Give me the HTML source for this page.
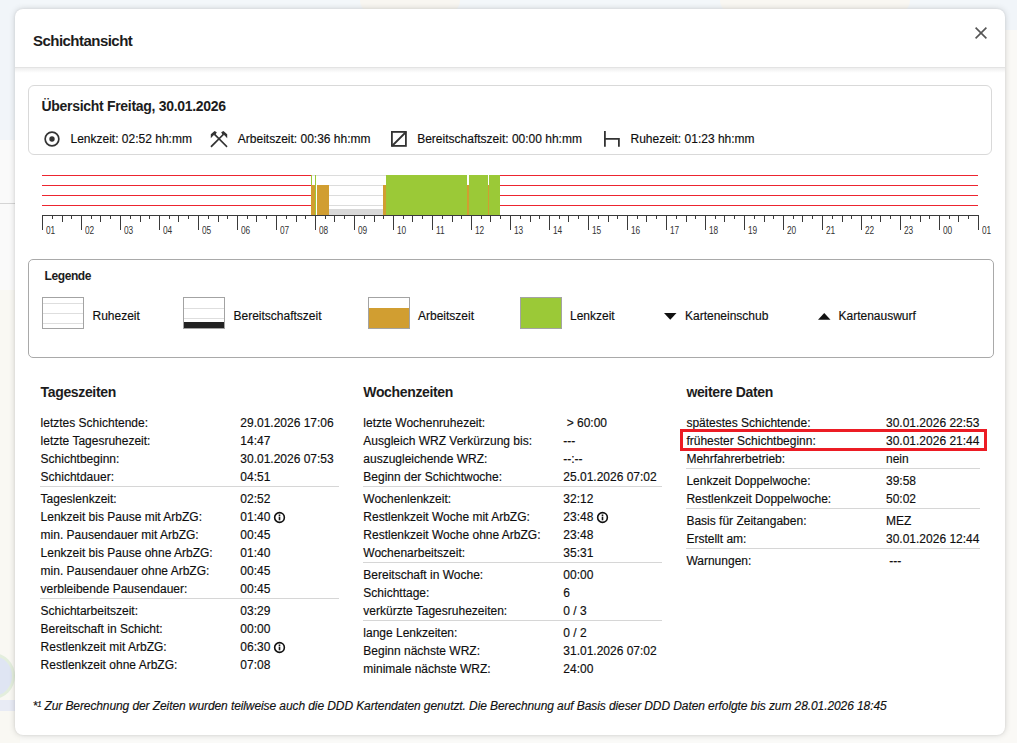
<!DOCTYPE html>
<html><head><meta charset="utf-8">
<style>
*{box-sizing:border-box;margin:0;padding:0}
html,body{width:1017px;height:743px;overflow:hidden}
body{background:#fafaf8;font-family:"Liberation Sans",sans-serif;color:#222;position:relative}
.modal{position:absolute;left:15px;top:9px;width:990px;height:726px;background:#fff;border-radius:8px;box-shadow:0 0 6px rgba(0,0,0,.17),0 0 2px rgba(0,0,0,.08)}
.hdr{position:absolute;left:15px;top:67px;width:990px;height:1px;background:#e3e3e3}
.hdrs{position:absolute;left:15px;top:68px;width:990px;height:5px;background:linear-gradient(rgba(0,0,0,.065),rgba(0,0,0,0))}
.box{position:absolute;border:1px solid #d9d9d9;border-radius:6px}
.a{position:absolute;white-space:nowrap;line-height:normal;-webkit-text-stroke:0.15px currentColor}
.sep{position:absolute;height:1px;background:#d6d6d6}
svg{position:absolute;overflow:visible}
</style></head><body>
<div style="position:absolute;left:0;top:0;width:1017px;height:30px;background:#f3f7fa"></div>
<div style="position:absolute;left:360px;top:0;width:100px;height:14px;background:#f8f6f1;border-radius:0 0 30px 30px"></div>
<div style="position:absolute;left:720px;top:0;width:190px;height:14px;background:#f9f7f2;border-radius:0 0 40px 40px"></div>
<div style="position:absolute;left:0;top:0;width:20px;height:140px;background:#f1f5f9"></div>
<div style="position:absolute;left:0;top:140px;width:20px;height:150px;background:#fafafa"></div>
<div style="position:absolute;left:0;top:203px;width:20px;height:1px;background:#d5d5d5"></div>
<div style="position:absolute;left:0;top:290px;width:20px;height:453px;background:#f9f8f3"></div>
<div style="position:absolute;left:-26px;top:656px;width:38px;height:40px;border-radius:50%;background:#dfe5f3;box-shadow:0 0 0 3px #e3eedd"></div>
<div style="position:absolute;left:0;top:700px;width:20px;height:11px;background:#e8ebf5"></div>
<div style="position:absolute;left:1000px;top:0;width:17px;height:30px;background:#f1f5f9"></div>
<div style="position:absolute;left:1000px;top:30px;width:17px;height:713px;background:#faf9f6"></div>
<div class="modal"></div>
<div class="hdr"></div><div class="hdrs"></div>
<div class="a" style="left:33px;top:32.42px;font-size:15px;font-weight:bold;font-style:normal;color:#1c1c1c;letter-spacing:-0.53px;-webkit-text-stroke:0;">Schichtansicht</div>
<svg style="left:975px;top:27px" width="12" height="12" viewBox="0 0 12 12"><path d="M0.6 0.6L11.4 11.4M11.4 0.6L0.6 11.4" stroke="#555" stroke-width="1.6"/></svg>
<div class="box" style="left:28px;top:85px;width:964px;height:70px"></div>
<div class="a" style="left:41.5px;top:98.03px;font-size:14px;font-weight:bold;font-style:normal;color:#1c1c1c;letter-spacing:-0.3px;-webkit-text-stroke:0;">Übersicht Freitag, 30.01.2026</div>
<svg style="left:44px;top:131px" width="16" height="16" viewBox="0 0 16 16"><circle cx="8" cy="8" r="6.85" fill="none" stroke="#333" stroke-width="1.7"/><circle cx="8" cy="8" r="2.7" fill="#333"/></svg>
<div class="a" style="left:70.5px;top:131.84px;font-size:12px;font-weight:normal;font-style:normal;color:#0e0e0e;">Lenkzeit: 02:52 hh:mm</div>
<svg style="left:206px;top:127px" width="26" height="24" viewBox="0 0 26 24"><path d="M5.6 19.2L16.8 8M20.4 19.2L9.2 8" stroke="#333" stroke-width="1.7" stroke-linecap="square"/><path d="M4.8 11.2L4.8 7.3L8.6 4L10.8 5.3L9.6 7.6L7.6 8.2Z" fill="#333"/><path d="M21.2 11.2L21.2 7.3L17.4 4L15.2 5.3L16.4 7.6L18.4 8.2Z" fill="#333"/></svg>
<div class="a" style="left:237.8px;top:131.84px;font-size:12px;font-weight:normal;font-style:normal;color:#0e0e0e;">Arbeitszeit: 00:36 hh:mm</div>
<svg style="left:391px;top:131px" width="16" height="16" viewBox="0 0 16 16"><rect x="0.9" y="0.9" width="14" height="14" fill="none" stroke="#333" stroke-width="1.8"/><path d="M1 15L15 1" stroke="#333" stroke-width="1.8"/></svg>
<div class="a" style="left:417.2px;top:131.84px;font-size:12px;font-weight:normal;font-style:normal;color:#0e0e0e;">Bereitschaftszeit: 00:00 hh:mm</div>
<svg style="left:604px;top:131px" width="16" height="16" viewBox="0 0 16 16"><path d="M0.9 0L0.9 15.7M0.9 7.9L14.9 7.9M14.9 7L14.9 15.7" stroke="#333" stroke-width="1.8" fill="none"/></svg>
<div class="a" style="left:630.5px;top:131.84px;font-size:12px;font-weight:normal;font-style:normal;color:#0e0e0e;">Ruhezeit: 01:23 hh:mm</div>
<svg style="left:0;top:0" width="1017" height="743" viewBox="0 0 1017 743" shape-rendering="crispEdges"><rect x="42" y="175" width="269" height="1" fill="#ec2530"/><rect x="500" y="175" width="478" height="1" fill="#ec2530"/><rect x="42" y="185" width="269" height="1" fill="#ec2530"/><rect x="500" y="185" width="478" height="1" fill="#ec2530"/><rect x="42" y="195" width="269" height="1" fill="#ec2530"/><rect x="500" y="195" width="478" height="1" fill="#ec2530"/><rect x="42" y="205" width="269" height="1" fill="#ec2530"/><rect x="500" y="205" width="478" height="1" fill="#ec2530"/><rect x="312" y="175" width="74" height="1" fill="#dcdcdc"/><rect x="329" y="185" width="54" height="1" fill="#dcdcdc"/><rect x="329" y="195" width="54" height="1" fill="#dcdcdc"/><rect x="329" y="205" width="54" height="1" fill="#dcdcdc"/><rect x="329" y="209" width="54" height="6" fill="#d9d9d9"/><rect x="311" y="185" width="4" height="30" fill="#d19e31"/><rect x="317" y="185" width="12" height="30" fill="#d19e31"/><rect x="383" y="185" width="3" height="30" fill="#d19e31"/><rect x="311" y="175" width="1" height="10" fill="#9bc937"/><rect x="315" y="175" width="1" height="40" fill="#9bc937"/><rect x="386" y="175" width="114" height="40" fill="#9bc937"/><rect x="467" y="175" width="2" height="10" fill="#fff"/><rect x="467" y="185" width="2" height="30" fill="#d19e31"/><rect x="488" y="175" width="1" height="10" fill="#fff"/><rect x="488" y="185" width="1" height="30" fill="#d19e31"/><rect x="42" y="215" width="937" height="1" fill="#3a3a3a"/><rect x="42" y="215" width="1" height="15" fill="#3a3a3a"/><rect x="52" y="215" width="1" height="4" fill="#3a3a3a"/><rect x="62" y="215" width="1" height="7" fill="#3a3a3a"/><rect x="71" y="215" width="1" height="4" fill="#3a3a3a"/><rect x="81" y="215" width="1" height="15" fill="#3a3a3a"/><rect x="91" y="215" width="1" height="4" fill="#3a3a3a"/><rect x="100" y="215" width="1" height="7" fill="#3a3a3a"/><rect x="110" y="215" width="1" height="4" fill="#3a3a3a"/><rect x="120" y="215" width="1" height="15" fill="#3a3a3a"/><rect x="130" y="215" width="1" height="4" fill="#3a3a3a"/><rect x="140" y="215" width="1" height="7" fill="#3a3a3a"/><rect x="149" y="215" width="1" height="4" fill="#3a3a3a"/><rect x="159" y="215" width="1" height="15" fill="#3a3a3a"/><rect x="169" y="215" width="1" height="4" fill="#3a3a3a"/><rect x="178" y="215" width="1" height="7" fill="#3a3a3a"/><rect x="188" y="215" width="1" height="4" fill="#3a3a3a"/><rect x="198" y="215" width="1" height="15" fill="#3a3a3a"/><rect x="208" y="215" width="1" height="4" fill="#3a3a3a"/><rect x="218" y="215" width="1" height="7" fill="#3a3a3a"/><rect x="227" y="215" width="1" height="4" fill="#3a3a3a"/><rect x="237" y="215" width="1" height="15" fill="#3a3a3a"/><rect x="247" y="215" width="1" height="4" fill="#3a3a3a"/><rect x="256" y="215" width="1" height="7" fill="#3a3a3a"/><rect x="266" y="215" width="1" height="4" fill="#3a3a3a"/><rect x="276" y="215" width="1" height="15" fill="#3a3a3a"/><rect x="286" y="215" width="1" height="4" fill="#3a3a3a"/><rect x="296" y="215" width="1" height="7" fill="#3a3a3a"/><rect x="305" y="215" width="1" height="4" fill="#3a3a3a"/><rect x="315" y="215" width="1" height="15" fill="#3a3a3a"/><rect x="325" y="215" width="1" height="4" fill="#3a3a3a"/><rect x="334" y="215" width="1" height="7" fill="#3a3a3a"/><rect x="344" y="215" width="1" height="4" fill="#3a3a3a"/><rect x="354" y="215" width="1" height="15" fill="#3a3a3a"/><rect x="364" y="215" width="1" height="4" fill="#3a3a3a"/><rect x="374" y="215" width="1" height="7" fill="#3a3a3a"/><rect x="383" y="215" width="1" height="4" fill="#3a3a3a"/><rect x="393" y="215" width="1" height="15" fill="#3a3a3a"/><rect x="403" y="215" width="1" height="4" fill="#3a3a3a"/><rect x="412" y="215" width="1" height="7" fill="#3a3a3a"/><rect x="422" y="215" width="1" height="4" fill="#3a3a3a"/><rect x="432" y="215" width="1" height="15" fill="#3a3a3a"/><rect x="442" y="215" width="1" height="4" fill="#3a3a3a"/><rect x="452" y="215" width="1" height="7" fill="#3a3a3a"/><rect x="461" y="215" width="1" height="4" fill="#3a3a3a"/><rect x="471" y="215" width="1" height="15" fill="#3a3a3a"/><rect x="481" y="215" width="1" height="4" fill="#3a3a3a"/><rect x="490" y="215" width="1" height="7" fill="#3a3a3a"/><rect x="500" y="215" width="1" height="4" fill="#3a3a3a"/><rect x="510" y="215" width="1" height="15" fill="#3a3a3a"/><rect x="520" y="215" width="1" height="4" fill="#3a3a3a"/><rect x="530" y="215" width="1" height="7" fill="#3a3a3a"/><rect x="539" y="215" width="1" height="4" fill="#3a3a3a"/><rect x="549" y="215" width="1" height="15" fill="#3a3a3a"/><rect x="559" y="215" width="1" height="4" fill="#3a3a3a"/><rect x="568" y="215" width="1" height="7" fill="#3a3a3a"/><rect x="578" y="215" width="1" height="4" fill="#3a3a3a"/><rect x="588" y="215" width="1" height="15" fill="#3a3a3a"/><rect x="598" y="215" width="1" height="4" fill="#3a3a3a"/><rect x="608" y="215" width="1" height="7" fill="#3a3a3a"/><rect x="617" y="215" width="1" height="4" fill="#3a3a3a"/><rect x="627" y="215" width="1" height="15" fill="#3a3a3a"/><rect x="637" y="215" width="1" height="4" fill="#3a3a3a"/><rect x="646" y="215" width="1" height="7" fill="#3a3a3a"/><rect x="656" y="215" width="1" height="4" fill="#3a3a3a"/><rect x="666" y="215" width="1" height="15" fill="#3a3a3a"/><rect x="676" y="215" width="1" height="4" fill="#3a3a3a"/><rect x="686" y="215" width="1" height="7" fill="#3a3a3a"/><rect x="695" y="215" width="1" height="4" fill="#3a3a3a"/><rect x="705" y="215" width="1" height="15" fill="#3a3a3a"/><rect x="715" y="215" width="1" height="4" fill="#3a3a3a"/><rect x="724" y="215" width="1" height="7" fill="#3a3a3a"/><rect x="734" y="215" width="1" height="4" fill="#3a3a3a"/><rect x="744" y="215" width="1" height="15" fill="#3a3a3a"/><rect x="754" y="215" width="1" height="4" fill="#3a3a3a"/><rect x="764" y="215" width="1" height="7" fill="#3a3a3a"/><rect x="773" y="215" width="1" height="4" fill="#3a3a3a"/><rect x="783" y="215" width="1" height="15" fill="#3a3a3a"/><rect x="793" y="215" width="1" height="4" fill="#3a3a3a"/><rect x="802" y="215" width="1" height="7" fill="#3a3a3a"/><rect x="812" y="215" width="1" height="4" fill="#3a3a3a"/><rect x="822" y="215" width="1" height="15" fill="#3a3a3a"/><rect x="832" y="215" width="1" height="4" fill="#3a3a3a"/><rect x="842" y="215" width="1" height="7" fill="#3a3a3a"/><rect x="851" y="215" width="1" height="4" fill="#3a3a3a"/><rect x="861" y="215" width="1" height="15" fill="#3a3a3a"/><rect x="871" y="215" width="1" height="4" fill="#3a3a3a"/><rect x="880" y="215" width="1" height="7" fill="#3a3a3a"/><rect x="890" y="215" width="1" height="4" fill="#3a3a3a"/><rect x="900" y="215" width="1" height="15" fill="#3a3a3a"/><rect x="910" y="215" width="1" height="4" fill="#3a3a3a"/><rect x="920" y="215" width="1" height="7" fill="#3a3a3a"/><rect x="929" y="215" width="1" height="4" fill="#3a3a3a"/><rect x="939" y="215" width="1" height="15" fill="#3a3a3a"/><rect x="949" y="215" width="1" height="4" fill="#3a3a3a"/><rect x="958" y="215" width="1" height="7" fill="#3a3a3a"/><rect x="968" y="215" width="1" height="4" fill="#3a3a3a"/><rect x="978" y="215" width="1" height="15" fill="#3a3a3a"/></svg>
<div class="a" style="left:45.5px;top:224.95px;font-size:10px;font-weight:normal;font-style:normal;color:#333;transform:scaleX(0.83);transform-origin:0 0;-webkit-text-stroke:0;">01</div>
<div class="a" style="left:84.5px;top:224.95px;font-size:10px;font-weight:normal;font-style:normal;color:#333;transform:scaleX(0.83);transform-origin:0 0;-webkit-text-stroke:0;">02</div>
<div class="a" style="left:123.5px;top:224.95px;font-size:10px;font-weight:normal;font-style:normal;color:#333;transform:scaleX(0.83);transform-origin:0 0;-webkit-text-stroke:0;">03</div>
<div class="a" style="left:162.5px;top:224.95px;font-size:10px;font-weight:normal;font-style:normal;color:#333;transform:scaleX(0.83);transform-origin:0 0;-webkit-text-stroke:0;">04</div>
<div class="a" style="left:201.5px;top:224.95px;font-size:10px;font-weight:normal;font-style:normal;color:#333;transform:scaleX(0.83);transform-origin:0 0;-webkit-text-stroke:0;">05</div>
<div class="a" style="left:240.5px;top:224.95px;font-size:10px;font-weight:normal;font-style:normal;color:#333;transform:scaleX(0.83);transform-origin:0 0;-webkit-text-stroke:0;">06</div>
<div class="a" style="left:279.5px;top:224.95px;font-size:10px;font-weight:normal;font-style:normal;color:#333;transform:scaleX(0.83);transform-origin:0 0;-webkit-text-stroke:0;">07</div>
<div class="a" style="left:318.5px;top:224.95px;font-size:10px;font-weight:normal;font-style:normal;color:#333;transform:scaleX(0.83);transform-origin:0 0;-webkit-text-stroke:0;">08</div>
<div class="a" style="left:357.5px;top:224.95px;font-size:10px;font-weight:normal;font-style:normal;color:#333;transform:scaleX(0.83);transform-origin:0 0;-webkit-text-stroke:0;">09</div>
<div class="a" style="left:396.5px;top:224.95px;font-size:10px;font-weight:normal;font-style:normal;color:#333;transform:scaleX(0.83);transform-origin:0 0;-webkit-text-stroke:0;">10</div>
<div class="a" style="left:435.5px;top:224.95px;font-size:10px;font-weight:normal;font-style:normal;color:#333;transform:scaleX(0.83);transform-origin:0 0;-webkit-text-stroke:0;">11</div>
<div class="a" style="left:474.5px;top:224.95px;font-size:10px;font-weight:normal;font-style:normal;color:#333;transform:scaleX(0.83);transform-origin:0 0;-webkit-text-stroke:0;">12</div>
<div class="a" style="left:513.5px;top:224.95px;font-size:10px;font-weight:normal;font-style:normal;color:#333;transform:scaleX(0.83);transform-origin:0 0;-webkit-text-stroke:0;">13</div>
<div class="a" style="left:552.5px;top:224.95px;font-size:10px;font-weight:normal;font-style:normal;color:#333;transform:scaleX(0.83);transform-origin:0 0;-webkit-text-stroke:0;">14</div>
<div class="a" style="left:591.5px;top:224.95px;font-size:10px;font-weight:normal;font-style:normal;color:#333;transform:scaleX(0.83);transform-origin:0 0;-webkit-text-stroke:0;">15</div>
<div class="a" style="left:630.5px;top:224.95px;font-size:10px;font-weight:normal;font-style:normal;color:#333;transform:scaleX(0.83);transform-origin:0 0;-webkit-text-stroke:0;">16</div>
<div class="a" style="left:669.5px;top:224.95px;font-size:10px;font-weight:normal;font-style:normal;color:#333;transform:scaleX(0.83);transform-origin:0 0;-webkit-text-stroke:0;">17</div>
<div class="a" style="left:708.5px;top:224.95px;font-size:10px;font-weight:normal;font-style:normal;color:#333;transform:scaleX(0.83);transform-origin:0 0;-webkit-text-stroke:0;">18</div>
<div class="a" style="left:747.5px;top:224.95px;font-size:10px;font-weight:normal;font-style:normal;color:#333;transform:scaleX(0.83);transform-origin:0 0;-webkit-text-stroke:0;">19</div>
<div class="a" style="left:786.5px;top:224.95px;font-size:10px;font-weight:normal;font-style:normal;color:#333;transform:scaleX(0.83);transform-origin:0 0;-webkit-text-stroke:0;">20</div>
<div class="a" style="left:825.5px;top:224.95px;font-size:10px;font-weight:normal;font-style:normal;color:#333;transform:scaleX(0.83);transform-origin:0 0;-webkit-text-stroke:0;">21</div>
<div class="a" style="left:864.5px;top:224.95px;font-size:10px;font-weight:normal;font-style:normal;color:#333;transform:scaleX(0.83);transform-origin:0 0;-webkit-text-stroke:0;">22</div>
<div class="a" style="left:903.5px;top:224.95px;font-size:10px;font-weight:normal;font-style:normal;color:#333;transform:scaleX(0.83);transform-origin:0 0;-webkit-text-stroke:0;">23</div>
<div class="a" style="left:942.5px;top:224.95px;font-size:10px;font-weight:normal;font-style:normal;color:#333;transform:scaleX(0.83);transform-origin:0 0;-webkit-text-stroke:0;">00</div>
<div class="a" style="left:981.5px;top:224.95px;font-size:10px;font-weight:normal;font-style:normal;color:#333;transform:scaleX(0.83);transform-origin:0 0;-webkit-text-stroke:0;">01</div>
<div class="box" style="left:28px;top:259px;width:966px;height:99px;border-color:#a9a9a9;border-radius:5px"></div>
<div class="a" style="left:44.5px;top:269.44px;font-size:12px;font-weight:bold;font-style:normal;color:#1c1c1c;letter-spacing:-0.4px;-webkit-text-stroke:0;">Legende</div>
<div style="position:absolute;left:42px;top:297px;width:42px;height:32px;border:1px solid #a3a3a3;background:#fff"></div><div style="position:absolute;left:43px;top:303px;width:40px;height:1px;background:#dedede"></div><div style="position:absolute;left:43px;top:313px;width:40px;height:1px;background:#dedede"></div><div style="position:absolute;left:43px;top:323px;width:40px;height:1px;background:#dedede"></div><div style="position:absolute;left:183px;top:297px;width:42px;height:32px;border:1px solid #a3a3a3;background:#fff"></div><div style="position:absolute;left:184px;top:308px;width:40px;height:1px;background:#dedede"></div><div style="position:absolute;left:184px;top:318px;width:40px;height:1px;background:#dedede"></div><div style="position:absolute;left:184px;top:322px;width:40px;height:6px;background:#222"></div><div style="position:absolute;left:368px;top:297px;width:42px;height:32px;border:1px solid #a3a3a3;background:#fff"></div><div style="position:absolute;left:369px;top:308px;width:40px;height:20px;background:#d19e31"></div><div style="position:absolute;left:520px;top:297px;width:42px;height:32px;border:1px solid #a3a3a3;background:#9bc937"></div>
<div class="a" style="left:92.5px;top:309.14px;font-size:12px;font-weight:normal;font-style:normal;color:#0e0e0e;">Ruhezeit</div>
<div class="a" style="left:233.5px;top:309.14px;font-size:12px;font-weight:normal;font-style:normal;color:#0e0e0e;">Bereitschaftszeit</div>
<div class="a" style="left:418px;top:309.14px;font-size:12px;font-weight:normal;font-style:normal;color:#0e0e0e;">Arbeitszeit</div>
<div class="a" style="left:570px;top:309.14px;font-size:12px;font-weight:normal;font-style:normal;color:#0e0e0e;">Lenkzeit</div>
<svg style="left:664px;top:313px" width="13" height="7" viewBox="0 0 13 7"><path d="M0 0L12.5 0L6.25 6.8Z" fill="#111"/></svg>
<div class="a" style="left:685px;top:309.14px;font-size:12px;font-weight:normal;font-style:normal;color:#0e0e0e;">Karteneinschub</div>
<svg style="left:818px;top:313px" width="13" height="7" viewBox="0 0 13 7"><path d="M0 6.8L12.5 6.8L6.25 0Z" fill="#111"/></svg>
<div class="a" style="left:838.5px;top:309.14px;font-size:12px;font-weight:normal;font-style:normal;color:#0e0e0e;">Kartenauswurf</div>
<div class="a" style="left:40.6px;top:384.33px;font-size:14px;font-weight:bold;font-style:normal;color:#1c1c1c;letter-spacing:-0.35px;-webkit-text-stroke:0;">Tageszeiten</div>
<div class="a" style="left:40.6px;top:416.14px;font-size:12px;font-weight:normal;font-style:normal;color:#0e0e0e;">letztes Schichtende:</div>
<div class="a" style="left:240.3px;top:416.14px;font-size:12px;font-weight:normal;font-style:normal;color:#0e0e0e;">29.01.2026 17:06</div>
<div class="a" style="left:40.6px;top:434.14px;font-size:12px;font-weight:normal;font-style:normal;color:#0e0e0e;">letzte Tagesruhezeit:</div>
<div class="a" style="left:240.3px;top:434.14px;font-size:12px;font-weight:normal;font-style:normal;color:#0e0e0e;">14:47</div>
<div class="a" style="left:40.6px;top:452.14px;font-size:12px;font-weight:normal;font-style:normal;color:#0e0e0e;">Schichtbeginn:</div>
<div class="a" style="left:240.3px;top:452.14px;font-size:12px;font-weight:normal;font-style:normal;color:#0e0e0e;">30.01.2026 07:53</div>
<div class="a" style="left:40.6px;top:470.14px;font-size:12px;font-weight:normal;font-style:normal;color:#0e0e0e;">Schichtdauer:</div>
<div class="a" style="left:240.3px;top:470.14px;font-size:12px;font-weight:normal;font-style:normal;color:#0e0e0e;">04:51</div>
<div class="sep" style="left:40.0px;top:486px;width:299px"></div>
<div class="a" style="left:40.6px;top:492.14px;font-size:12px;font-weight:normal;font-style:normal;color:#0e0e0e;">Tageslenkzeit:</div>
<div class="a" style="left:240.3px;top:492.14px;font-size:12px;font-weight:normal;font-style:normal;color:#0e0e0e;">02:52</div>
<div class="a" style="left:40.6px;top:510.14px;font-size:12px;font-weight:normal;font-style:normal;color:#0e0e0e;">Lenkzeit bis Pause mit ArbZG:</div>
<div class="a" style="left:240.3px;top:510.14px;font-size:12px;font-weight:normal;font-style:normal;color:#0e0e0e;">01:40</div>
<svg width="11" height="11" viewBox="0 0 11 11" style="position:absolute;left:274.3px;top:511.5px"><circle cx="5.5" cy="5.5" r="4.85" fill="none" stroke="#111" stroke-width="1.6"/><rect x="4.7" y="4.6" width="1.6" height="3.7" fill="#111"/><rect x="4.7" y="2.5" width="1.6" height="1.5" fill="#111"/></svg><div class="a" style="left:40.6px;top:528.14px;font-size:12px;font-weight:normal;font-style:normal;color:#0e0e0e;">min. Pausendauer mit ArbZG:</div>
<div class="a" style="left:240.3px;top:528.14px;font-size:12px;font-weight:normal;font-style:normal;color:#0e0e0e;">00:45</div>
<div class="a" style="left:40.6px;top:546.14px;font-size:12px;font-weight:normal;font-style:normal;color:#0e0e0e;">Lenkzeit bis Pause ohne ArbZG:</div>
<div class="a" style="left:240.3px;top:546.14px;font-size:12px;font-weight:normal;font-style:normal;color:#0e0e0e;">01:40</div>
<div class="a" style="left:40.6px;top:564.14px;font-size:12px;font-weight:normal;font-style:normal;color:#0e0e0e;">min. Pausendauer ohne ArbZG:</div>
<div class="a" style="left:240.3px;top:564.14px;font-size:12px;font-weight:normal;font-style:normal;color:#0e0e0e;">00:45</div>
<div class="a" style="left:40.6px;top:582.14px;font-size:12px;font-weight:normal;font-style:normal;color:#0e0e0e;">verbleibende Pausendauer:</div>
<div class="a" style="left:240.3px;top:582.14px;font-size:12px;font-weight:normal;font-style:normal;color:#0e0e0e;">00:45</div>
<div class="sep" style="left:40.0px;top:598px;width:299px"></div>
<div class="a" style="left:40.6px;top:604.14px;font-size:12px;font-weight:normal;font-style:normal;color:#0e0e0e;">Schichtarbeitszeit:</div>
<div class="a" style="left:240.3px;top:604.14px;font-size:12px;font-weight:normal;font-style:normal;color:#0e0e0e;">03:29</div>
<div class="a" style="left:40.6px;top:622.14px;font-size:12px;font-weight:normal;font-style:normal;color:#0e0e0e;">Bereitschaft in Schicht:</div>
<div class="a" style="left:240.3px;top:622.14px;font-size:12px;font-weight:normal;font-style:normal;color:#0e0e0e;">00:00</div>
<div class="a" style="left:40.6px;top:640.14px;font-size:12px;font-weight:normal;font-style:normal;color:#0e0e0e;">Restlenkzeit mit ArbZG:</div>
<div class="a" style="left:240.3px;top:640.14px;font-size:12px;font-weight:normal;font-style:normal;color:#0e0e0e;">06:30</div>
<svg width="11" height="11" viewBox="0 0 11 11" style="position:absolute;left:274.3px;top:641.5px"><circle cx="5.5" cy="5.5" r="4.85" fill="none" stroke="#111" stroke-width="1.6"/><rect x="4.7" y="4.6" width="1.6" height="3.7" fill="#111"/><rect x="4.7" y="2.5" width="1.6" height="1.5" fill="#111"/></svg><div class="a" style="left:40.6px;top:658.14px;font-size:12px;font-weight:normal;font-style:normal;color:#0e0e0e;">Restlenkzeit ohne ArbZG:</div>
<div class="a" style="left:240.3px;top:658.14px;font-size:12px;font-weight:normal;font-style:normal;color:#0e0e0e;">07:08</div>
<div class="a" style="left:363.3px;top:384.33px;font-size:14px;font-weight:bold;font-style:normal;color:#1c1c1c;letter-spacing:-0.35px;-webkit-text-stroke:0;">Wochenzeiten</div>
<div class="a" style="left:363.3px;top:416.14px;font-size:12px;font-weight:normal;font-style:normal;color:#0e0e0e;">letzte Wochenruhezeit:</div>
<div class="a" style="left:563.3px;top:416.14px;font-size:12px;font-weight:normal;font-style:normal;color:#0e0e0e;">&nbsp;&gt; 60:00</div>
<div class="a" style="left:363.3px;top:434.14px;font-size:12px;font-weight:normal;font-style:normal;color:#0e0e0e;">Ausgleich WRZ Verkürzung bis:</div>
<div class="a" style="left:563.3px;top:434.14px;font-size:12px;font-weight:normal;font-style:normal;color:#0e0e0e;">---</div>
<div class="a" style="left:363.3px;top:452.14px;font-size:12px;font-weight:normal;font-style:normal;color:#0e0e0e;">auszugleichende WRZ:</div>
<div class="a" style="left:563.3px;top:452.14px;font-size:12px;font-weight:normal;font-style:normal;color:#0e0e0e;">--:--</div>
<div class="a" style="left:363.3px;top:470.14px;font-size:12px;font-weight:normal;font-style:normal;color:#0e0e0e;">Beginn der Schichtwoche:</div>
<div class="a" style="left:563.3px;top:470.14px;font-size:12px;font-weight:normal;font-style:normal;color:#0e0e0e;">25.01.2026 07:02</div>
<div class="sep" style="left:362.7px;top:486px;width:299px"></div>
<div class="a" style="left:363.3px;top:492.14px;font-size:12px;font-weight:normal;font-style:normal;color:#0e0e0e;">Wochenlenkzeit:</div>
<div class="a" style="left:563.3px;top:492.14px;font-size:12px;font-weight:normal;font-style:normal;color:#0e0e0e;">32:12</div>
<div class="a" style="left:363.3px;top:510.14px;font-size:12px;font-weight:normal;font-style:normal;color:#0e0e0e;">Restlenkzeit Woche mit ArbZG:</div>
<div class="a" style="left:563.3px;top:510.14px;font-size:12px;font-weight:normal;font-style:normal;color:#0e0e0e;">23:48</div>
<svg width="11" height="11" viewBox="0 0 11 11" style="position:absolute;left:597.3px;top:511.5px"><circle cx="5.5" cy="5.5" r="4.85" fill="none" stroke="#111" stroke-width="1.6"/><rect x="4.7" y="4.6" width="1.6" height="3.7" fill="#111"/><rect x="4.7" y="2.5" width="1.6" height="1.5" fill="#111"/></svg><div class="a" style="left:363.3px;top:528.14px;font-size:12px;font-weight:normal;font-style:normal;color:#0e0e0e;">Restlenkzeit Woche ohne ArbZG:</div>
<div class="a" style="left:563.3px;top:528.14px;font-size:12px;font-weight:normal;font-style:normal;color:#0e0e0e;">23:48</div>
<div class="a" style="left:363.3px;top:546.14px;font-size:12px;font-weight:normal;font-style:normal;color:#0e0e0e;">Wochenarbeitszeit:</div>
<div class="a" style="left:563.3px;top:546.14px;font-size:12px;font-weight:normal;font-style:normal;color:#0e0e0e;">35:31</div>
<div class="sep" style="left:362.7px;top:562px;width:299px"></div>
<div class="a" style="left:363.3px;top:568.14px;font-size:12px;font-weight:normal;font-style:normal;color:#0e0e0e;">Bereitschaft in Woche:</div>
<div class="a" style="left:563.3px;top:568.14px;font-size:12px;font-weight:normal;font-style:normal;color:#0e0e0e;">00:00</div>
<div class="a" style="left:363.3px;top:586.14px;font-size:12px;font-weight:normal;font-style:normal;color:#0e0e0e;">Schichttage:</div>
<div class="a" style="left:563.3px;top:586.14px;font-size:12px;font-weight:normal;font-style:normal;color:#0e0e0e;">6</div>
<div class="a" style="left:363.3px;top:604.14px;font-size:12px;font-weight:normal;font-style:normal;color:#0e0e0e;">verkürzte Tagesruhezeiten:</div>
<div class="a" style="left:563.3px;top:604.14px;font-size:12px;font-weight:normal;font-style:normal;color:#0e0e0e;">0 / 3</div>
<div class="sep" style="left:362.7px;top:620px;width:299px"></div>
<div class="a" style="left:363.3px;top:626.14px;font-size:12px;font-weight:normal;font-style:normal;color:#0e0e0e;">lange Lenkzeiten:</div>
<div class="a" style="left:563.3px;top:626.14px;font-size:12px;font-weight:normal;font-style:normal;color:#0e0e0e;">0 / 2</div>
<div class="a" style="left:363.3px;top:644.14px;font-size:12px;font-weight:normal;font-style:normal;color:#0e0e0e;">Beginn nächste WRZ:</div>
<div class="a" style="left:563.3px;top:644.14px;font-size:12px;font-weight:normal;font-style:normal;color:#0e0e0e;">31.01.2026 07:02</div>
<div class="a" style="left:363.3px;top:662.14px;font-size:12px;font-weight:normal;font-style:normal;color:#0e0e0e;">minimale nächste WRZ:</div>
<div class="a" style="left:563.3px;top:662.14px;font-size:12px;font-weight:normal;font-style:normal;color:#0e0e0e;">24:00</div>
<div class="a" style="left:686.4px;top:384.33px;font-size:14px;font-weight:bold;font-style:normal;color:#1c1c1c;letter-spacing:-0.35px;-webkit-text-stroke:0;">weitere Daten</div>
<div class="a" style="left:686.4px;top:416.14px;font-size:12px;font-weight:normal;font-style:normal;color:#0e0e0e;">spätestes Schichtende:</div>
<div class="a" style="left:886px;top:416.14px;font-size:12px;font-weight:normal;font-style:normal;color:#0e0e0e;">30.01.2026 22:53</div>
<div class="a" style="left:686.4px;top:434.14px;font-size:12px;font-weight:normal;font-style:normal;color:#0e0e0e;">frühester Schichtbeginn:</div>
<div class="a" style="left:886px;top:434.14px;font-size:12px;font-weight:normal;font-style:normal;color:#0e0e0e;">30.01.2026 21:44</div>
<div class="a" style="left:686.4px;top:452.14px;font-size:12px;font-weight:normal;font-style:normal;color:#0e0e0e;">Mehrfahrerbetrieb:</div>
<div class="a" style="left:886px;top:452.14px;font-size:12px;font-weight:normal;font-style:normal;color:#0e0e0e;">nein</div>
<div class="sep" style="left:685.8px;top:468px;width:294px"></div>
<div class="a" style="left:686.4px;top:474.14px;font-size:12px;font-weight:normal;font-style:normal;color:#0e0e0e;">Lenkzeit Doppelwoche:</div>
<div class="a" style="left:886px;top:474.14px;font-size:12px;font-weight:normal;font-style:normal;color:#0e0e0e;">39:58</div>
<div class="a" style="left:686.4px;top:492.14px;font-size:12px;font-weight:normal;font-style:normal;color:#0e0e0e;">Restlenkzeit Doppelwoche:</div>
<div class="a" style="left:886px;top:492.14px;font-size:12px;font-weight:normal;font-style:normal;color:#0e0e0e;">50:02</div>
<div class="sep" style="left:685.8px;top:508px;width:294px"></div>
<div class="a" style="left:686.4px;top:514.14px;font-size:12px;font-weight:normal;font-style:normal;color:#0e0e0e;">Basis für Zeitangaben:</div>
<div class="a" style="left:886px;top:514.14px;font-size:12px;font-weight:normal;font-style:normal;color:#0e0e0e;">MEZ</div>
<div class="a" style="left:686.4px;top:532.14px;font-size:12px;font-weight:normal;font-style:normal;color:#0e0e0e;">Erstellt am:</div>
<div class="a" style="left:886px;top:532.14px;font-size:12px;font-weight:normal;font-style:normal;color:#0e0e0e;">30.01.2026 12:44</div>
<div class="sep" style="left:685.8px;top:548px;width:294px"></div>
<div class="a" style="left:686.4px;top:554.14px;font-size:12px;font-weight:normal;font-style:normal;color:#0e0e0e;">Warnungen:</div>
<div class="a" style="left:886px;top:554.14px;font-size:12px;font-weight:normal;font-style:normal;color:#0e0e0e;">&nbsp;---</div>
<div style="position:absolute;left:680px;top:429px;width:307px;height:22px;border:3px solid #ec1c24"></div>
<div class="a" style="left:32.7px;top:699.44px;font-size:12px;font-weight:normal;font-style:italic;color:#111;letter-spacing:-0.09px;">*¹ Zur Berechnung der Zeiten wurden teilweise auch die DDD Kartendaten genutzt. Die Berechnung auf Basis dieser DDD Daten erfolgte bis zum 28.01.2026 18:45</div>
</body></html>
